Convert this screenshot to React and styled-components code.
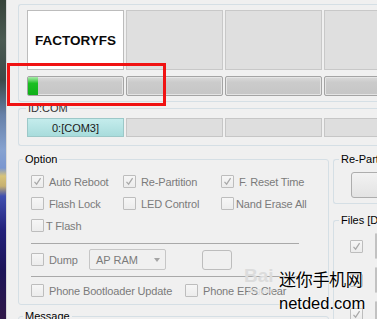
import React from "react";
import styled, { createGlobalStyle } from "styled-components";

const Global = createGlobalStyle`
  html, body { margin: 0; padding: 0; }
  body {
    width: 377px; height: 319px; overflow: hidden; background: #f0f0f0;
    font-family: "Liberation Sans", Arial, sans-serif; font-size: 11px;
  }
`;

const Screen = styled.div`
  position: relative;
  display: flex;
  width: 377px;
  height: 319px;
  overflow: hidden;
  background: #f0f0f0;
`;

const DesktopStrip = styled.div`
  flex: 0 0 7px;
  border-right: 1px solid #d8d8d8;
  box-sizing: border-box;
  background: linear-gradient(
    180deg,
    #36433a 0px,
    #4a5a52 40px,
    #3c4a48 80px,
    #6680a8 115px,
    #86a2d0 150px,
    #7a96d0 168px,
    #d8c47a 176px,
    #c6b070 186px,
    #4050b0 196px,
    #22207a 230px,
    #1c1458 270px,
    #301848 319px
  );
`;

const Main = styled.div`
  flex: 1;
  min-width: 0;
  padding-left: 11px;
  display: flex;
  flex-direction: column;
`;

const TopPanel = styled.div`
  margin-top: 4px;
  border: 1px solid #d5dfe5;
  border-right: none;
  border-radius: 3px 0 0 3px;
  padding: 5px 0 5px 8px;
  display: flex;
  flex-direction: column;
  gap: 6px;
`;

const SlotRow = styled.div`
  display: grid;
  grid-template-columns: repeat(4, 97px);
  column-gap: 2px;
`;

const Slot = styled.div`
  box-sizing: border-box;
  height: 60px;
  border: 1px solid ${(p) => (p.$active ? "#bcbcbc" : "#c8c8c8")};
  background: ${(p) => (p.$active ? "#ffffff" : "#dfdfdf")};
  display: flex;
  align-items: center;
  justify-content: center;
  font-family: "Liberation Sans", Arial, sans-serif;
  font-weight: bold;
  font-size: 13.5px;
  color: #0a0a0a;
`;

const Progress = styled.div`
  position: relative;
  box-sizing: border-box;
  height: 20px;
  border: 1px solid #a4a4a4;
  border-radius: 2px;
  background: linear-gradient(180deg, #dadada 0%, #cbcbcb 30%, #c6c6c6 100%);
  box-shadow: inset 0 0 0 1px #e4e4e4;
  overflow: hidden;
`;

const ProgressFill = styled.div`
  height: 100%;
  background: linear-gradient(180deg, #a8ecaa 0%, #5fd462 20%, #1cbf22 35%, #10b018 100%);
`;

const Group = styled.fieldset`
  margin: ${(p) => p.$margin || "0"};
  padding: 0;
  min-width: 0;
  border: 1px solid #d5dfe5;
  border-radius: 3px;
  ${(p) => p.$open && "border-right: none; border-radius: 3px 0 0 3px;"}
`;

const Legend = styled.legend`
  margin-left: ${(p) => p.$indent ?? 4}px;
  padding: 0 2px;
  font-size: 11px;
  line-height: 12px;
  color: ${(p) => p.$color || "#000"};
  white-space: nowrap;
`;

const GroupBody = styled.div`
  padding: ${(p) => p.$pad};
  display: flex;
  flex-direction: column;
`;

const ComCell = styled.div`
  box-sizing: border-box;
  height: 19px;
  border: 1px solid ${(p) => (p.$active ? "#9cc8c8" : "#c6c6c6")};
  background: ${(p) =>
    p.$active ? "linear-gradient(180deg, #c4ecec 0%, #a8dcdc 100%)" : "#dedede"};
  display: flex;
  align-items: center;
  justify-content: center;
  font-size: 11px;
  color: #1a1a1a;
`;

const Lower = styled.div`
  display: flex;
  gap: 4px;
  margin-top: 7px;
`;

const LeftCol = styled.div`
  flex: 0 0 311px;
  display: flex;
  flex-direction: column;
  gap: 5px;
`;

const RightCol = styled.div`
  flex: 1;
  min-width: 0;
  display: flex;
  flex-direction: column;
  gap: 10px;
`;

const CheckRow = styled.div`
  display: flex;
  align-items: center;
  height: ${(p) => p.$h || 13}px;
  margin-top: ${(p) => p.$mt || 0}px;
`;

const Item = styled.div`
  display: flex;
  align-items: center;
  gap: ${(p) => (p.$tight ? 2 : 5)}px;
  width: ${(p) => (p.$w ? `${p.$w}px` : "auto")};
  flex: none;
  color: #7b7b7b;
  font-size: 11px;
  letter-spacing: -0.15px;
  white-space: nowrap;
`;

const Box = styled.span`
  box-sizing: border-box;
  width: 13px;
  height: 13px;
  flex: none;
  border: 1px solid #bdbdbd;
  border-radius: 1px;
  background: linear-gradient(180deg, #f6f6f6, #ececec);
  display: flex;
  align-items: center;
  justify-content: center;
`;

const Separator = styled.div`
  width: 268px;
  height: 0;
  border-top: 1px solid #a9a9a9;
  margin-top: ${(p) => p.$mt}px;
`;

const Combo = styled.div`
  box-sizing: border-box;
  width: 77px;
  height: 21px;
  border: 1px solid #c6c6c6;
  border-radius: 2px;
  background: #f0f0f0;
  display: flex;
  align-items: center;
  justify-content: space-between;
  padding: 0 5px 0 6px;
  color: #7b7b7b;
  font-size: 11px;
`;

const Arrow = styled.span`
  width: 0;
  height: 0;
  border-left: 3.5px solid transparent;
  border-right: 3.5px solid transparent;
  border-top: 4px solid #a4a4a4;
`;

const SmallButton = styled.div`
  box-sizing: border-box;
  width: 30px;
  height: 20px;
  margin-left: 36px;
  border: 1px solid #bdbdbd;
  border-radius: 3px;
  background: #f0f0f0;
`;

const BigButton = styled.div`
  box-sizing: border-box;
  width: 60px;
  height: 26px;
  border: 1px solid #adadad;
  border-radius: 3px;
  background: linear-gradient(180deg, #f2f2f2, #e3e3e3);
`;

const FileRow = styled.div`
  display: flex;
  align-items: center;
  gap: 12px;
  height: 26px;
  margin-bottom: 8px;
`;

const FileField = styled.div`
  box-sizing: border-box;
  width: 40px;
  height: 26px;
  border: 1px solid #c2c2c2;
  border-radius: 2px;
  background: #f4f4f4;
`;

const RedMark = styled.div`
  position: absolute;
  left: 7px;
  top: 63px;
  width: 159px;
  height: 43px;
  box-sizing: border-box;
  border: 3px solid #f01212;
  pointer-events: none;
`;

const BaiduMark = styled.div`
  position: absolute;
  left: 244px;
  top: 266px;
  color: #dcdcdc;
  font-family: "Liberation Sans", Arial, sans-serif;
  font-weight: bold;
  font-size: 19px;
  line-height: 20px;
  pointer-events: none;
`;

const BaiduSub = styled.div`
  font-size: 8px;
  line-height: 9px;
  font-weight: normal;
  padding-left: 4px;
`;

const Watermark = styled.div`
  position: absolute;
  left: 279px;
  top: 268px;
  display: flex;
  flex-direction: column;
  align-items: flex-start;
  color: #000;
  text-shadow: 0 0 2px #fff, 0 0 2px #fff;
  pointer-events: none;
`;

const WmCn = styled.div`
  font-family: "Noto Sans CJK SC", sans-serif;
  font-size: 17px;
  line-height: 22px;
  letter-spacing: -0.3px;
`;

const WmEn = styled.div`
  font-family: "Liberation Sans", Arial, sans-serif;
  font-size: 16.5px;
  line-height: 20px;
  margin-top: 3px;
`;

function Check({ checked }) {
  return (
    <Box>
      {checked && (
        <svg width="9" height="9" viewBox="0 0 9 9">
          <path d="M1.5 4.8 L3.6 7.2 L7.6 1.2" fill="none" stroke="#a8a8a8" strokeWidth="1.2" />
        </svg>
      )}
    </Box>
  );
}

function Opt({ label, checked, w, tight }) {
  return (
    <Item $w={w} $tight={tight}>
      <Check checked={checked} />
      <span>{label}</span>
    </Item>
  );
}

export default function App() {
  return (
    <>
      <Global />
      <Screen>
        <DesktopStrip />
        <Main>
          <TopPanel>
            <SlotRow>
              <Slot $active>FACTORYFS</Slot>
              <Slot />
              <Slot />
              <Slot />
            </SlotRow>
            <SlotRow>
              <Progress>
                <ProgressFill style={{ width: "10px" }} />
              </Progress>
              <Progress />
              <Progress />
              <Progress />
            </SlotRow>
          </TopPanel>

          <Group $open>
            <Legend $indent={7} $color="#333">ID:COM</Legend>
            <GroupBody $pad="4px 0 8px 8px">
              <SlotRow>
                <ComCell $active>0:[COM3]</ComCell>
                <ComCell />
                <ComCell />
                <ComCell />
              </SlotRow>
            </GroupBody>
          </Group>

          <Lower>
            <LeftCol>
              <Group>
                <Legend $indent={4}>Option</Legend>
                <GroupBody $pad="10px 0 7px 12px">
                  <CheckRow>
                    <Opt w={92} label="Auto Reboot" checked />
                    <Opt w={98} label="Re-Partition" checked />
                    <Opt label="F. Reset Time" checked />
                  </CheckRow>
                  <CheckRow $mt={9}>
                    <Opt w={92} label="Flash Lock" />
                    <Opt w={98} label="LED Control" />
                    <Opt label="Nand Erase All" tight />
                  </CheckRow>
                  <CheckRow $mt={9}>
                    <Opt label="T Flash" tight />
                  </CheckRow>
                  <Separator $mt={11} />
                  <CheckRow $h={21} $mt={5}>
                    <Opt w={58} label="Dump" />
                    <Combo>
                      <span>AP RAM</span>
                      <Arrow />
                    </Combo>
                    <SmallButton />
                  </CheckRow>
                  <Separator $mt={6} />
                  <CheckRow $mt={7}>
                    <Opt w={154} label="Phone Bootloader Update" />
                    <Opt label="Phone EFS Clear" />
                  </CheckRow>
                </GroupBody>
              </Group>
              <Group>
                <Legend $indent={4}>Message</Legend>
                <GroupBody $pad="4px 0 40px 12px" />
              </Group>
            </LeftCol>

            <RightCol>
              <Group $open>
                <Legend $indent={5}>Re-Partition</Legend>
                <GroupBody $pad="7px 0 5px 17px">
                  <BigButton />
                </GroupBody>
              </Group>
              <Group $open>
                <Legend $indent={5}>Files [Download]</Legend>
                <GroupBody $pad="7px 0 0 16px">
                  <FileRow>
                    <Check checked />
                    <FileField />
                  </FileRow>
                  <FileRow>
                    <Check checked />
                    <FileField />
                  </FileRow>
                  <FileRow>
                    <Check checked />
                    <FileField />
                  </FileRow>
                </GroupBody>
              </Group>
            </RightCol>
          </Lower>
        </Main>

        <RedMark />
        <BaiduMark>
          Bai
          <BaiduSub>jingyan</BaiduSub>
        </BaiduMark>
        <Watermark>
          <WmCn>迷你手机网</WmCn>
          <WmEn>netded.com</WmEn>
        </Watermark>
      </Screen>
    </>
  );
}
